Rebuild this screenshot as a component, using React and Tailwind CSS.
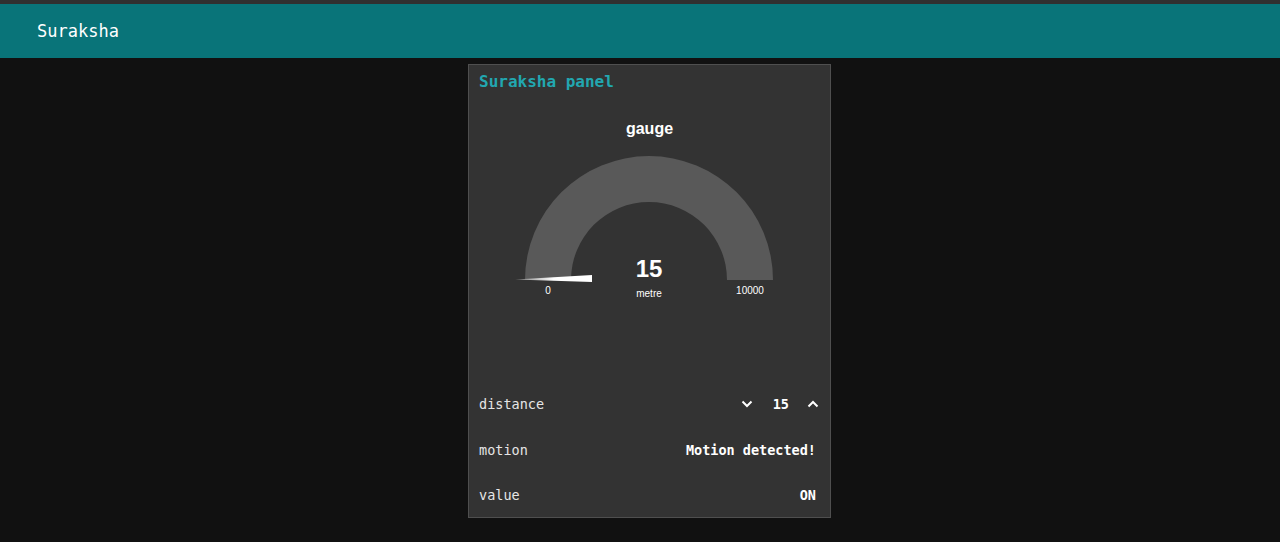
import React from "react";

const mono = { fontFamily: '"DejaVu Sans Mono", "Liberation Mono", monospace' };

function Chevron({ up }) {
  return (
    <svg width="12" height="8" viewBox="0 0 12 8" className="block">
      <polyline
        points={up ? "1.5,6.5 6,2 10.5,6.5" : "1.5,1.5 6,6 10.5,1.5"}
        fill="none"
        stroke="#ffffff"
        strokeWidth="2"
      />
    </svg>
  );
}

function Gauge() {
  return (
    <svg width="361" height="162" viewBox="0 0 361 162" className="block">
      <defs>
        <linearGradient id="ng" x1="0" y1="0" x2="1" y2="0">
          <stop offset="0" stopColor="#777777" />
          <stop offset="0.5" stopColor="#ffffff" />
          <stop offset="1" stopColor="#ffffff" />
        </linearGradient>
      </defs>
      <path
        d="M 56 140 A 124 124 0 0 1 304 140 L 258 140 A 78 78 0 0 0 102 140 Z"
        fill="#595959"
      />
      <polygon points="46,139.5 123,135 123,142" fill="url(#ng)" />
      <text
        x="180"
        y="137"
        textAnchor="middle"
        fill="#ffffff"
        fontSize="24"
        fontWeight="700"
        fontFamily='"Liberation Sans", Arial, sans-serif'
      >
        15
      </text>
      <text
        x="180"
        y="157"
        textAnchor="middle"
        fill="#ffffff"
        fontSize="10"
        fontFamily='"Liberation Sans", Arial, sans-serif'
      >
        metre
      </text>
      <text
        x="79"
        y="154"
        textAnchor="middle"
        fill="#ffffff"
        fontSize="10"
        fontFamily='"Liberation Sans", Arial, sans-serif'
      >
        0
      </text>
      <text
        x="281"
        y="154"
        textAnchor="middle"
        fill="#ffffff"
        fontSize="10"
        fontFamily='"Liberation Sans", Arial, sans-serif'
      >
        10000
      </text>
    </svg>
  );
}

export default function App() {
  return (
    <div className="min-h-[542px] w-full bg-[#111111]" style={mono}>
      <div className="h-[4px] bg-[#303030]" />
      <div className="h-[54px] bg-[#097479] flex items-center pl-[37px] pt-[2px]">
        <span className="text-[17px] text-white">Suraksha</span>
      </div>
      <div className="ml-[468px] mt-[6px] w-[363px] h-[454px] bg-[#333333] border border-[#4f4f4f] flex flex-col">
        <div className="h-[33px] flex items-center pl-[10px]">
          <span className="text-[16px] font-bold text-[#22a7b0]">Suraksha panel</span>
        </div>
        <div className="h-[283px] flex flex-col items-center">
          <div
            className="mt-[21px] h-[20px] leading-[20px] text-[16px] font-bold text-white"
            style={{ fontFamily: '"Liberation Sans", Arial, sans-serif' }}
          >
            gauge
          </div>
          <div className="mt-[1px]">
            <Gauge />
          </div>
        </div>
        <div className="h-[46px] flex items-center justify-between pl-[10px] pr-[11px] text-[13.5px]">
          <span className="text-[#e6e6e6]">distance</span>
          <div className="flex items-center">
            <Chevron />
            <span className="ml-[20px] mr-[18px] font-bold text-white">15</span>
            <Chevron up />
          </div>
        </div>
        <div className="h-[46px] flex items-center justify-between pl-[10px] pr-[14px] text-[13.5px]">
          <span className="text-[#e6e6e6]">motion</span>
          <span className="font-bold text-white">Motion detected!</span>
        </div>
        <div className="h-[44px] flex items-center justify-between pl-[10px] pr-[14px] text-[13.5px]">
          <span className="text-[#e6e6e6]">value</span>
          <span className="font-bold text-white">ON</span>
        </div>
      </div>
    </div>
  );
}
